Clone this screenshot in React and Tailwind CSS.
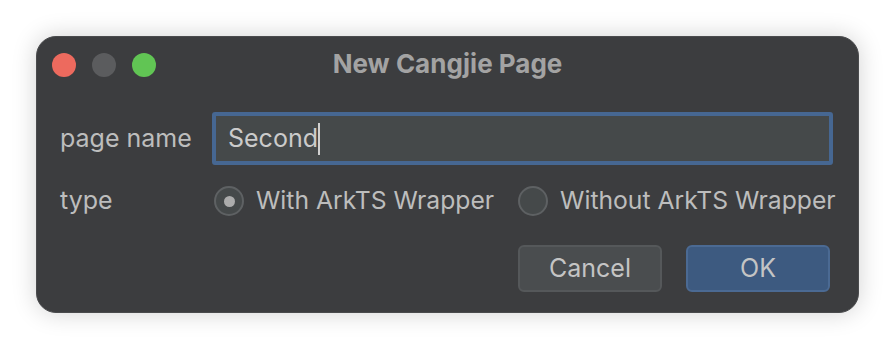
import React from "react";

export default function App() {
  const font = { fontFamily: "Inter, 'Liberation Sans', Arial, sans-serif" };
  return (
    <div className="w-[896px] h-[350px] bg-white pt-[36px] pl-[36px]" style={font}>
      <div className="w-[823px] h-[277px] bg-[#3c3d3f] rounded-[20px] shadow-[0_0_24px_rgba(0,0,0,0.18)] flex flex-col border border-[#4a4b4d]">
        {/* Title bar */}
        <div className="h-[55px] grid grid-cols-[1fr_auto_1fr] items-center">
          <div className="flex items-center gap-[16px] pl-[15px]">
            <div className="w-[24px] h-[24px] rounded-full bg-[#ed6a5e]" />
            <div className="w-[24px] h-[24px] rounded-full bg-[#5b5c5e]" />
            <div className="w-[24px] h-[24px] rounded-full bg-[#61c554]" />
          </div>
          <div className="text-[26px] font-bold text-[#a3a3a3] leading-none -mt-[2px]">New Cangjie Page</div>
          <div />
        </div>
        {/* Form */}
        <div className="flex flex-col pl-[23px] pr-[25px] mt-[20px]">
          <div className="flex items-center h-[53px]">
            <div className="w-[152px] shrink-0 text-[25px] text-[#bdbdbd] whitespace-nowrap">page name</div>
            <div className="flex-1 h-[53px] rounded-[3px] border-[4px] border-[#466792] bg-[#45494a] flex items-center pl-[12px]">
              <span className="text-[25px] text-[#cbcbcb]">Second</span>
              <span className="w-[2px] h-[32px] bg-[#d0d0d0]" />
            </div>
          </div>
          <div className="flex items-center h-[30px] mt-[21px] whitespace-nowrap">
            <div className="w-[154px] shrink-0 text-[25px] text-[#bdbdbd]">type</div>
            <div className="flex items-center gap-[12px] shrink-0">
              <div className="w-[30px] h-[30px] rounded-full border-[2px] border-[#5e6163] bg-[#45494a] flex items-center justify-center">
                <div className="w-[11px] h-[11px] rounded-full bg-[#acacac]" />
              </div>
              <span className="text-[24.7px] text-[#bdbdbd]">With ArkTS Wrapper</span>
            </div>
            <div className="flex items-center gap-[12px] ml-[24px] shrink-0">
              <div className="w-[30px] h-[30px] rounded-full border-[2px] border-[#5e6163] bg-[#45494a]" />
              <span className="text-[24.7px] text-[#bdbdbd]">Without ArkTS Wrapper</span>
            </div>
          </div>
          <div className="flex justify-end gap-[24px] mt-[29px] pr-[3px]">
            <div className="w-[144px] h-[47px] rounded-[6px] bg-[#4a4d4f] border-[2px] border-[#55585a] flex items-center justify-center text-[25px] text-[#c4c4c4]">Cancel</div>
            <div className="w-[144px] h-[47px] rounded-[6px] bg-[#3d5a80] border-[2px] border-[#4b6a93] flex items-center justify-center text-[25px] text-[#c4c4c4]">OK</div>
          </div>
        </div>
      </div>
    </div>
  );
}
